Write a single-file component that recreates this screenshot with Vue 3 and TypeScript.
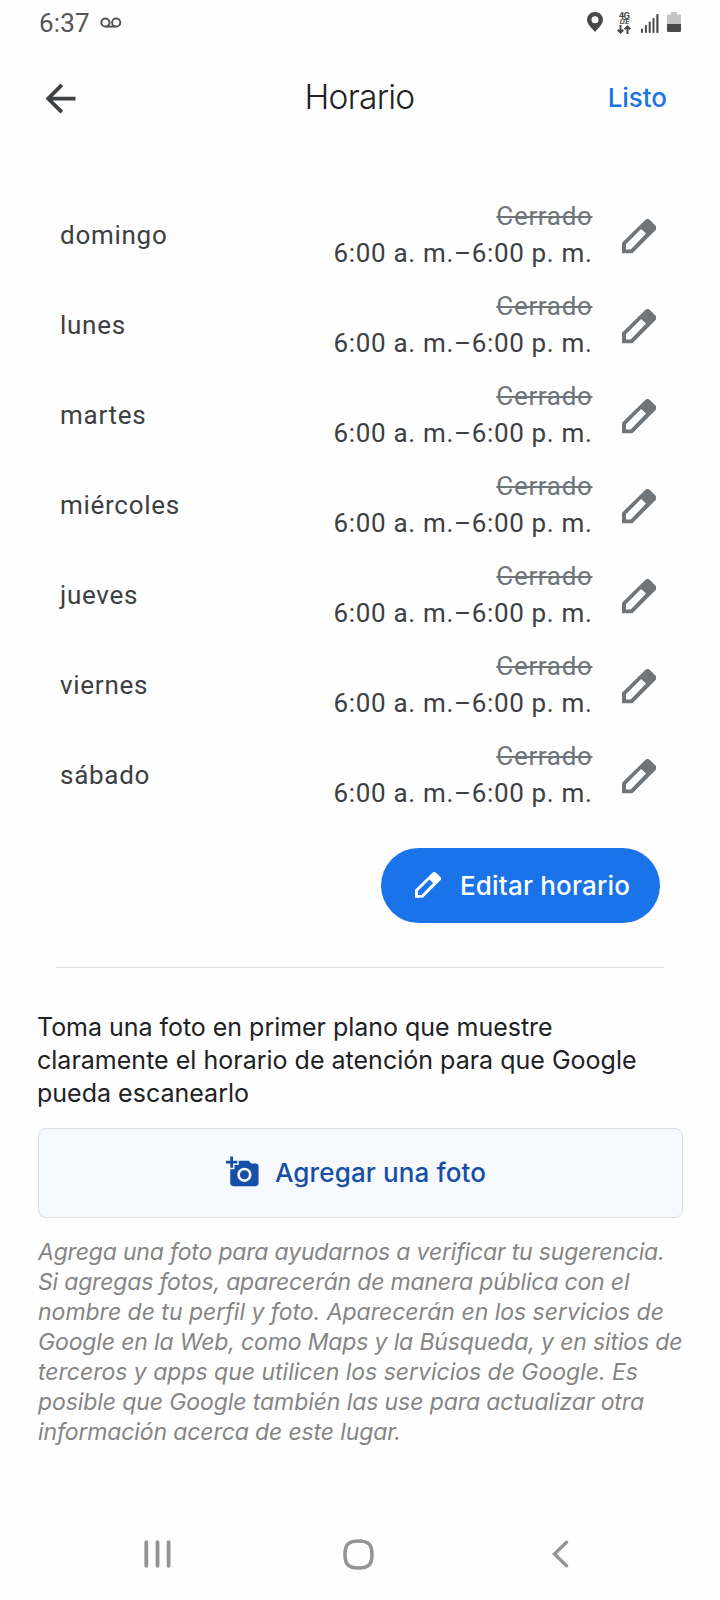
<script setup lang="ts">
interface TextLine {
  text: string
  spacing: number
}

const days: string[] = ['domingo', 'lunes', 'martes', 'miércoles', 'jueves', 'viernes', 'sábado']
const previous = 'Cerrado'
const hours = '6:00 a. m.–6:00 p. m.'

const prompt: TextLine[] = [
  { text: 'Toma una foto en primer plano que muestre', spacing: -0.03 },
  { text: 'claramente el horario de atención para que Google', spacing: 0.01 },
  { text: 'pueda escanearlo', spacing: 0.01 },
]

const disclaimer: TextLine[] = [
  { text: 'Agrega una foto para ayudarnos a verificar tu sugerencia.', spacing: -0.18 },
  { text: 'Si agregas fotos, aparecerán de manera pública con el', spacing: -0.18 },
  { text: 'nombre de tu perfil y foto. Aparecerán en los servicios de', spacing: -0.01 },
  { text: 'Google en la Web, como Maps y la Búsqueda, y en sitios de', spacing: -0.14 },
  { text: 'terceros y apps que utilicen los servicios de Google. Es', spacing: -0.01 },
  { text: 'posible que Google también las use para actualizar otra', spacing: -0.09 },
  { text: 'información acerca de este lugar.', spacing: -0.12 },
]

const pencil =
  'M0 34.300V23.700L23.200 1.100a3.400 3.400 0 0 1 4.700 0l5.500 5.300a3.400 3.400 0 0 1 0 4.800L10.400 34.300zM4 30.400h4.700L24 14.600l-4.900-4.700L4 25.200z'
</script>

<template>
  <div class="screen">
    <div class="status">
      <span class="clock">6:37</span>
      <svg class="voicemail" width="22" height="12" viewBox="0 0 22 12" fill="none" stroke="#555" stroke-width="2">
        <circle cx="5.4" cy="5.5" r="4.1" />
        <circle cx="16.2" cy="5.5" r="4.1" />
        <path d="M5.4 9.6h10.8" />
      </svg>
      <svg class="pin" width="16" height="20" viewBox="0 0 16 20">
        <path
          fill="#4a4a4a"
          fill-rule="evenodd"
          d="M8 0C3.5 0 0 3.5 0 7.8 0 12 4 15.500 8 20c4-4.500 8-8 8-12.200C16 3.500 12.500 0 8 0zM8 4.300a3.500 3.500 0 1 1 0 7 3.500 3.500 0 0 1 0-7z"
        />
      </svg>
      <div class="network">
        <span class="gen">4G</span>
        <span class="lte">LTE</span>
        <svg width="14" height="9" viewBox="0 0 14 9" fill="none" stroke="#4a4a4a" stroke-width="2">
          <path d="M3.500 0v7.500M.7 4.700l2.800 2.800 2.800-2.800M10.500 9V1.500M7.700 4.300l2.800-2.800 2.800 2.800" />
        </svg>
      </div>
      <svg class="signal" width="18" height="19" viewBox="0 0 18 19" fill="#4a4a4a">
        <rect x="0" y="14.500" width="2" height="4.500" rx=".8" />
        <rect x="3.900" y="11" width="2" height="8" rx=".8" />
        <rect x="7.700" y="7.500" width="2" height="11.500" rx=".8" />
        <rect x="11.500" y="4" width="2" height="15" rx=".8" />
        <rect x="15.300" y="0" width="2.200" height="19" rx=".8" />
      </svg>
      <svg class="battery" width="14" height="20" viewBox="0 0 14 20">
        <path fill="#c4c4c4" d="M4 0h6v2.500h3a1 1 0 0 1 1 1V13H0V3.500a1 1 0 0 1 1-1h3z" />
        <path fill="#4a4a4a" d="M0 12h14v7a1 1 0 0 1-1 1H1a1 1 0 0 1-1-1z" />
      </svg>
    </div>

    <header class="header">
      <svg class="back" width="45" height="45" viewBox="0 0 24 24" fill="#3c4043">
        <path d="M20 11H7.830l5.590-5.590L12 4l-8 8 8 8 1.410-1.410L7.830 13H20v-2z" />
      </svg>
      <h1 class="title">Horario</h1>
      <span class="done">Listo</span>
    </header>

    <ul class="schedule">
      <li v-for="day in days" :key="day" class="row">
        <span class="day">{{ day }}</span>
        <div class="times">
          <s class="old">{{ previous }}</s>
          <span>{{ hours }}</span>
        </div>
        <svg class="edit" width="34.5" height="34.5" viewBox="0 0 34.5 34.5" fill="#70757a" fill-rule="evenodd">
          <path :d="pencil" />
        </svg>
      </li>
    </ul>

    <button class="primary" type="button">
      <svg width="26" height="26" viewBox="0 0 34.5 34.5" fill="#fff" fill-rule="evenodd"><path :d="pencil" /></svg>
      <span>Editar horario</span>
    </button>

    <div class="divider"></div>

    <p class="prompt">
      <span v-for="l in prompt" :key="l.text" class="line" :style="{ letterSpacing: l.spacing + 'px' }">{{ l.text }}</span>
    </p>

    <button class="photo" type="button">
      <svg width="34" height="34" viewBox="0 0 24 24" fill="#174ea6">
        <path
          d="M3 4V1h2v3h3v2H5v3H3V6H0V4h3zm3 6V7h3V4h7l1.830 2H21c1.100 0 2 .9 2 2v12c0 1.100-.9 2-2 2H5c-1.100 0-2-.9-2-2V10h3zm7 9c2.760 0 5-2.240 5-5s-2.240-5-5-5-5 2.240-5 5 2.240 5 5 5zm-3.200-5c0 1.770 1.430 3.200 3.200 3.200s3.200-1.430 3.200-3.200-1.430-3.200-3.200-3.200-3.200 1.430-3.200 3.200z"
        />
      </svg>
      <span>Agregar una foto</span>
    </button>

    <p class="disclaimer">
      <span v-for="l in disclaimer" :key="l.text" class="line" :style="{ letterSpacing: l.spacing + 'px' }">{{ l.text }}</span>
    </p>

    <nav class="nav">
      <svg width="28" height="28" viewBox="0 0 28 28" fill="none" stroke="#949494" stroke-width="3.800" stroke-linecap="round">
        <path d="M2.300 2.200v23.600M13.500 2.200v23.600M24.600 2.200v23.600" />
      </svg>
      <svg class="home" width="31" height="31" viewBox="0 0 31 31" fill="none" stroke="#949494" stroke-width="3.600">
        <path d="M15.500 2C25.500 2 29 5.500 29 15.500S25.500 29 15.500 29 2 25.500 2 15.500 5.500 2 15.500 2z" />
      </svg>
      <svg width="17" height="28" viewBox="0 0 17 28" fill="none" stroke="#949494" stroke-width="3.400" stroke-linecap="round">
        <path d="M14.500 2.200L2.400 14l12.100 11.800" />
      </svg>
    </nav>
  </div>
</template>

<style>
body {
  margin: 0;
  background: #fefefe;
}
</style>

<style scoped>
.screen {
  box-sizing: border-box;
  width: 720px;
  height: 1600px;
  display: flex;
  flex-direction: column;
  overflow: hidden;
  background: #fefefe;
  font-family: Inter, Roboto, sans-serif;
  color: #202124;
}
svg {
  display: block;
  flex: none;
}
.status {
  height: 46px;
  flex: none;
  display: flex;
  align-items: center;
  padding: 0 39px;
  box-sizing: border-box;
}
.clock {
  font: 400 26px/46px Roboto, sans-serif;
  letter-spacing: 0.15px;
  color: #555;
}
.voicemail {
  margin: -1px auto 0 10px;
}
.pin {
  margin-right: 14px;
  margin-top: -2px;
}
.network {
  width: 14px;
  margin-right: 10px;
  display: flex;
  flex-direction: column;
  align-items: center;
  color: #4a4a4a;
  font-family: Roboto, sans-serif;
  font-weight: 700;
}
.gen {
  font-size: 9.5px;
  line-height: 7px;
  letter-spacing: -0.6px;
}
.lte {
  font-size: 7px;
  line-height: 6px;
  letter-spacing: -0.8px;
  font-style: italic;
}
.signal {
  margin-right: 8px;
}
.battery {
  margin-top: -2px;
}
.header {
  height: 102px;
  flex: none;
  display: grid;
  grid-template-columns: 1fr auto 1fr;
  align-items: center;
  padding: 0 53px 0 38px;
}
.back {
  margin-top: 3px;
}
.title {
  margin: 0 0 0 14px;
  font-weight: 350;
  font-size: 33.5px;
  line-height: 40px;
  letter-spacing: -0.75px;
}
.done {
  justify-self: end;
  font-weight: 500;
  font-size: 26px;
  line-height: 34px;
  letter-spacing: -0.05px;
  padding-top: 1px;
  color: #1a73e8;
}
.schedule {
  list-style: none;
  margin: 42px 0 0;
  padding: 0 64px 0 60px;
  font-family: Roboto, sans-serif;
  font-size: 26px;
  line-height: 37px;
  letter-spacing: 0.72px;
  color: #3c4043;
}
.row {
  height: 90px;
  display: flex;
  align-items: center;
}
.day {
  flex: 1;
}
.times {
  display: flex;
  flex-direction: column;
  align-items: flex-end;
  letter-spacing: 0.67px;
}
.old {
  color: #70757a;
}
.edit {
  margin: 3px 0 0 29px;
}
button {
  font-family: inherit;
  font-weight: 500;
  font-size: 26px;
  display: flex;
  align-items: center;
  box-sizing: border-box;
  flex: none;
}
.primary {
  align-self: flex-end;
  width: 279px;
  height: 75px;
  margin: 28px 60px 0 0;
  padding: 0 0 1px 34px;
  border: 0;
  border-radius: 38px;
  gap: 19px;
  background: #1a73e8;
  color: #fff;
  letter-spacing: 0.18px;
}
.divider {
  height: 1px;
  flex: none;
  margin: 44px 56px 43px;
  background: #dadce0;
}
.line {
  display: block;
  white-space: nowrap;
}
.prompt {
  margin: 0 0 18px 37px;
  font-size: 25px;
  line-height: 33px;
}
.photo {
  height: 90px;
  margin: 0 37px 0 38px;
  border: 1px solid #dadce0;
  border-radius: 8px;
  background: #f6f9fe;
  color: #174ea6;
  padding: 0 0 2px 187px;
  gap: 15px;
  letter-spacing: 0.12px;
}
.disclaimer {
  margin: 19px 0 0 38px;
  font-size: 23px;
  line-height: 30px;
  font-style: italic;
  color: #858585;
}
.nav {
  margin-top: auto;
  height: 92px;
  flex: none;
  display: flex;
  align-items: center;
  justify-content: space-between;
  padding: 0 151px 0 144px;
}
.home {
  margin-right: 8px;
}
</style>
